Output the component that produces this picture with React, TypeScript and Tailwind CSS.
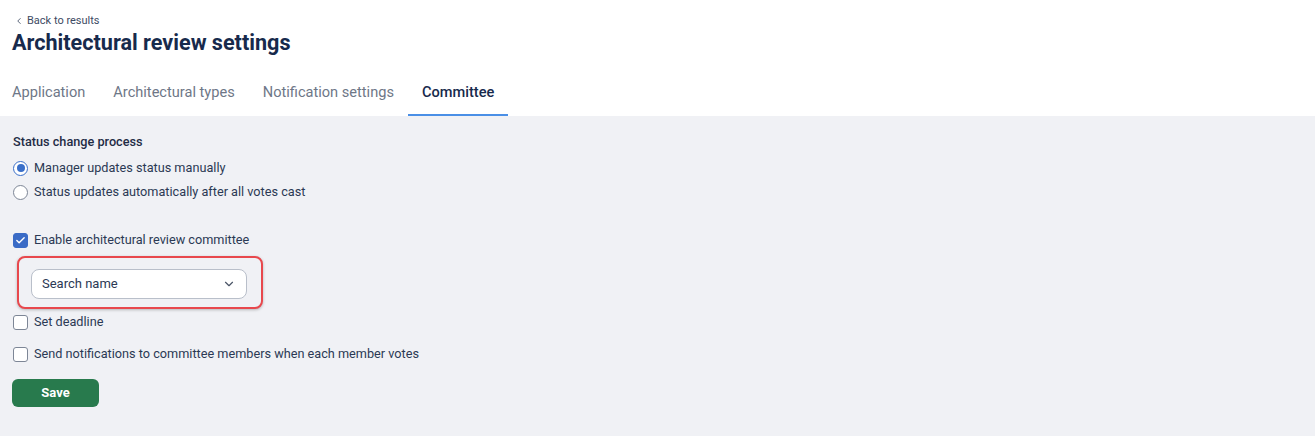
import { ChevronDown, ChevronLeft, Check } from 'lucide-react'

const tabs = ['Application', 'Architectural types', 'Notification settings', 'Committee']

function Radio({ checked, label }: { checked?: boolean; label: string }) {
  return (
    <label className="flex h-[24px] items-center gap-[6px]">
      <span
        className={`flex h-[15px] w-[15px] items-center justify-center rounded-full border bg-white ${
          checked ? 'border-[#3a6fc9]' : 'border-[#7d8696]'
        }`}
      >
        {checked && <span className="h-[8px] w-[8px] rounded-full bg-[#3a6fc9]" />}
      </span>
      <span>{label}</span>
    </label>
  )
}

function Checkbox({ checked, label }: { checked?: boolean; label: string }) {
  return (
    <label className="flex h-[24px] items-center gap-[6px]">
      <span
        className={`flex h-[15px] w-[15px] items-center justify-center rounded-[3px] border ${
          checked ? 'border-[#3a6bc6] bg-[#3a6bc6]' : 'border-[#7d8696] bg-white'
        }`}
      >
        {checked && <Check size={11} strokeWidth={3} className="text-white" />}
      </span>
      <span>{label}</span>
    </label>
  )
}

export default function App() {
  return (
    <div className="h-[436px] w-full bg-[#f0f1f5] font-['Roboto','Liberation_Sans',sans-serif]">
      <header className="bg-white px-[12px] pt-[13px]">
        <a className="flex h-[16px] items-center gap-[3px] pl-[2px] text-[11px] text-[#3d4a63]">
          <ChevronLeft size={10} strokeWidth={2} />
          Back to results
        </a>
        <h1 className="h-[28px] text-[21.6px] font-bold leading-[28px] text-[#172a4c]">Architectural review settings</h1>
        <nav className="ml-[-14px] mt-[11px] flex">
          {tabs.map((tab) => (
            <div
              key={tab}
              className={`border-b-2 px-[14px] pb-[12px] pt-[14px] text-[14.6px] leading-[20px] ${
                tab === 'Committee'
                  ? 'border-[#4a8fe6] font-medium text-[#172a4c]'
                  : 'border-transparent text-[#6e7787]'
              }`}
            >
              {tab}
            </div>
          ))}
        </nav>
      </header>

      <section className="px-[13px] pt-[17px] text-[12.7px] text-[#2b3954]">
        <p className="h-[18px] font-medium leading-[18px] text-[#1f2c45]">Status change process</p>
        <div className="mt-[5px]">
          <Radio checked label="Manager updates status manually" />
          <Radio label="Status updates automatically after all votes cast" />
        </div>
        <div className="mt-[24px]">
          <Checkbox checked label="Enable architectural review committee" />
        </div>
        <div className="ml-[4px] mt-[4px] w-[246px] rounded-[8px] border-2 border-[#e8484d] bg-[#f0f1f5] pb-[8px] pl-[12px] pt-[11px] shadow-[0_1px_3px_rgba(0,0,0,0.25)]">
          <div className="flex h-[30px] w-[216px] items-center justify-between rounded-[8px] border border-[#b9bfca] bg-white pl-[10px] pr-[10px] text-[13px] text-[#2b3954]">
            <span>Search name</span>
            <ChevronDown size={14} strokeWidth={2} className="text-[#4b5567]" />
          </div>
        </div>
        <div className="mt-[1px]">
          <Checkbox label="Set deadline" />
        </div>
        <div className="mt-[8px]">
          <Checkbox label="Send notifications to committee members when each member votes" />
        </div>
        <button
          type="button"
          className="ml-[-1px] mt-[13px] h-[28px] w-[87px] rounded-[6px] bg-[#287a4d] text-[13px] font-bold text-white"
        >
          Save
        </button>
      </section>
    </div>
  )
}
